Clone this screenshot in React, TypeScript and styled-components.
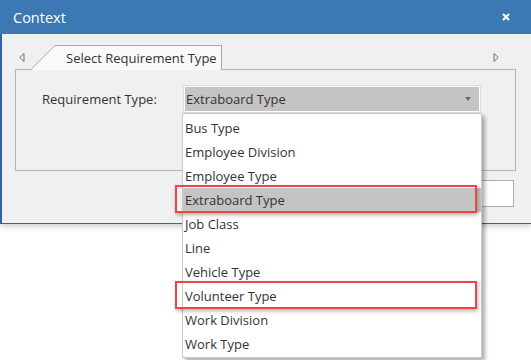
import React from 'react';
import styled, { createGlobalStyle } from 'styled-components';

const Global = createGlobalStyle`
  html, body { margin: 0; padding: 0; background: #ffffff; }
  body {
    width: 531px; height: 360px; overflow: hidden;
    font-family: "Segoe UI", "Open Sans", "Noto Sans", sans-serif;
  }
`;

const Window = styled.div`
  width: 531px;
  display: flex;
  flex-direction: column;
  box-shadow: 0 2px 6px rgba(0, 0, 0, 0.22);
`;

const TitleBar = styled.div`
  height: 34px;
  background: #3c78b4;
  color: #ffffff;
  display: flex;
  align-items: center;
  justify-content: space-between;
  padding: 0 21px 0 13px;
  font-size: 14.5px;
  box-sizing: border-box;
`;

const Body = styled.div`
  height: 190px;
  box-sizing: border-box;
  background: #f0f0f0;
  border-left: 2px solid #2f66a2;
  border-bottom: 1px solid #2f66a2;
  padding: 0 15px 0 13px;
  display: flex;
  flex-direction: column;
`;

const TabStrip = styled.div`
  display: flex;
  align-items: center;
  padding-top: 11px;
  height: 24px;
`;

const ArrowIcon = styled.svg<{ $side: 'left' | 'right' }>`
  width: 6px;
  height: 9px;
  margin-left: ${(p) => (p.$side === 'left' ? '4px' : 'auto')};
  margin-right: ${(p) => (p.$side === 'right' ? '17px' : '0')};
  flex: none;
`;

const Tab = styled.div`
  display: flex;
  align-self: flex-start;
  height: 25px;
  margin-left: 6px;
  position: relative;
  z-index: 1;
`;

const TabSlant = styled.svg`
  width: 24px;
  height: 25px;
  display: block;
  flex: none;
`;

const TabLabel = styled.div`
  width: 167px;
  box-sizing: border-box;
  background: #f9f9f9;
  border-top: 1px solid #a8a8a8;
  border-right: 1px solid #a8a8a8;
  padding: 0 0 1px 11px;
  display: flex;
  align-items: center;
  font-size: 13px;
  color: #333333;
  white-space: nowrap;
`;

const Panel = styled.div`
  height: 102px;
  box-sizing: border-box;
  border: 1px solid #b4b4b4;
  padding: 15px 0 0 26px;
  display: grid;
  grid-template-columns: 141px 298px;
  align-items: start;
`;

const FieldLabel = styled.div`
  font-size: 13px;
  color: #333333;
  line-height: 28px;
  white-space: nowrap;
`;

const Combo = styled.div`
  position: relative;
  width: 298px;
  height: 28px;
  box-sizing: border-box;
  background: #c4c4c4;
  border: 1px solid #dcdcdc;
  box-shadow: inset 0 0 0 1px #ffffff;
  padding: 0 9px 0 2px;
  display: flex;
  align-items: center;
  justify-content: space-between;
  font-size: 13px;
  color: #333333;
`;

const Caret = styled.svg`
  width: 6px;
  height: 4px;
  display: block;
`;

const DropList = styled.div`
  position: absolute;
  top: calc(100% + 1px);
  left: -2px;
  width: 300px;
  box-sizing: border-box;
  background: #ffffff;
  border: 1px solid #cacaca;
  padding: 2px 0 1px;
  box-shadow: 3px 3px 4px rgba(0, 0, 0, 0.32);
  z-index: 10;
`;

const Item = styled.div<{ $selected?: boolean; $marked?: boolean }>`
  position: relative;
  height: 24px;
  line-height: 25px;
  padding-left: 2px;
  font-size: 13px;
  color: #333333;
  white-space: nowrap;
  background: ${(p) => (p.$selected ? '#c4c4c4' : 'transparent')};
  &::after {
    content: '';
    display: ${(p) => (p.$marked ? 'block' : 'none')};
    position: absolute;
    left: -8px;
    right: 4px;
    top: -3px;
    bottom: -1px;
    border: 2px solid #ee4444;
    box-shadow: 1px 2px 4px rgba(0, 0, 0, 0.3);
  }
`;

const ButtonRow = styled.div`
  display: flex;
  justify-content: flex-end;
  gap: 8px;
  margin-top: 9px;
  padding-right: 2px;
`;

const Button = styled.button`
  width: 104px;
  height: 27px;
  box-sizing: border-box;
  background: #ffffff;
  border: 1px solid #adadad;
  font-family: inherit;
  font-size: 13px;
  color: #333333;
  padding: 0;
`;

const CloseIcon = styled.svg`
  width: 8px;
  height: 8px;
  display: block;
`;

const items = [
  'Bus Type',
  'Employee Division',
  'Employee Type',
  'Extraboard Type',
  'Job Class',
  'Line',
  'Vehicle Type',
  'Volunteer Type',
  'Work Division',
  'Work Type',
];

export default function App() {
  return (
    <>
      <Global />
      <Window>
        <TitleBar>
          <span>Context</span>
          <CloseIcon viewBox="0 0 8 8">
            <path d="M1 1 L7 7 M7 1 L1 7" stroke="#ffffff" strokeWidth="2" />
          </CloseIcon>
        </TitleBar>
        <Body>
          <TabStrip>
            <ArrowIcon $side="left" viewBox="0 0 6 9">
              <polygon points="5,0.5 0.8,4.5 5,8.5" fill="none" stroke="#707070" strokeWidth="1" />
            </ArrowIcon>
            <Tab>
              <TabSlant viewBox="0 0 24 25">
                <polygon points="0,25 24,0 24,25" fill="#f9f9f9" />
                <line x1="0" y1="24.5" x2="24" y2="0.5" stroke="#a8a8a8" strokeWidth="1" />
              </TabSlant>
              <TabLabel>Select Requirement Type</TabLabel>
            </Tab>
            <ArrowIcon $side="right" viewBox="0 0 6 9">
              <polygon points="1,0.5 5.2,4.5 1,8.5" fill="none" stroke="#707070" strokeWidth="1" />
            </ArrowIcon>
          </TabStrip>
          <Panel>
            <FieldLabel>Requirement Type:</FieldLabel>
            <Combo>
              <span>Extraboard Type</span>
              <Caret viewBox="0 0 6 4">
                <polygon points="0,0 6,0 3,4" fill="#6a6a6a" />
              </Caret>
              <DropList>
                {items.map((it) => (
                  <Item
                    key={it}
                    $selected={it === 'Extraboard Type'}
                    $marked={it === 'Extraboard Type' || it === 'Volunteer Type'}
                  >
                    {it}
                  </Item>
                ))}
              </DropList>
            </Combo>
          </Panel>
          <ButtonRow>
            <Button>OK</Button>
            <Button>Cancel</Button>
          </ButtonRow>
        </Body>
      </Window>
    </>
  );
}
